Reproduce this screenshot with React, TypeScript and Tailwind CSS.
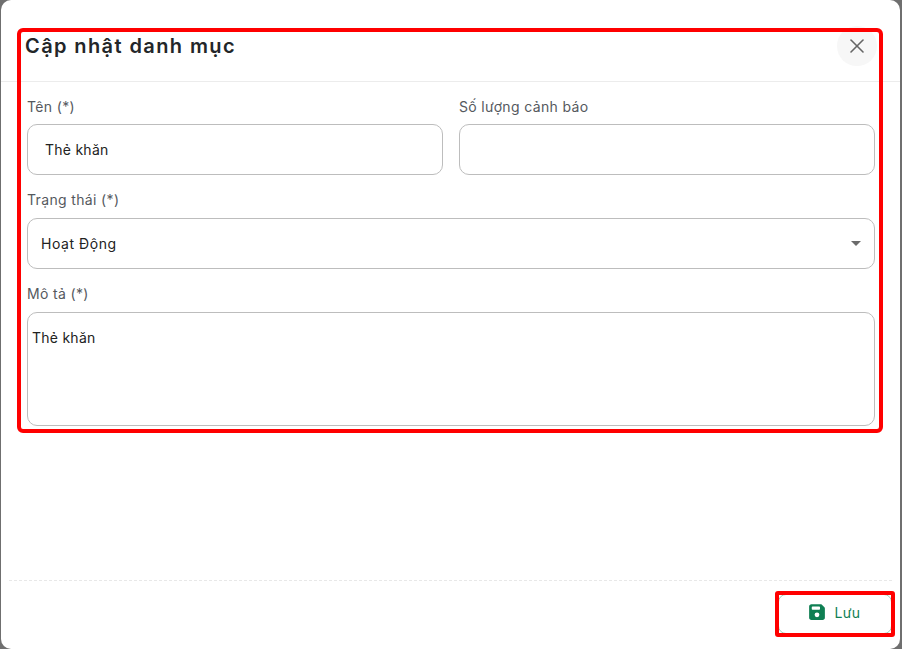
import React from 'react';
import { X } from 'lucide-react';

const labelClass = 'block text-[14px] leading-[18px] text-[#55595e] tracking-[0.35px]';
const boxClass = 'w-full rounded-[10px] border border-[#bdbdbd] bg-white text-[14px] tracking-[0.25px] text-[#222222] flex items-center';

const SaveIcon = () => (
  <svg width="18" height="18" viewBox="0 0 24 24" fill="#0f7f53" aria-hidden="true">
    <path d="M4.5 1.5h12.2c.6 0 1.1.2 1.5.6l3.7 3.7c.4.4.6.9.6 1.5v12.2c0 1.7-1.3 3-3 3h-15c-1.700 0-3-1.300-3-3v-15c0-1.700 1.300-3 3-3zM6 4.500c-.6 0-1 .4-1 1V8c0 .6.400 1 1 1h9c.6 0 1-.4 1-1V5.500c0-.6-.4-1-1-1H6zM12 19a3.200 3.200 0 1 0 0-6.400 3.200 3.200 0 0 0 0 6.400z" fillRule="evenodd" />
  </svg>
);

export default function App() {
  return (
    <div className="h-[649px] w-[902px] overflow-hidden bg-[#6f6f6f] font-['Inter',sans-serif]">
      <div className="relative ml-px flex h-full w-[899px] flex-col rounded-[10px] bg-white">
        {/* Header */}
        <div className="flex h-[82px] flex-none items-start justify-between border-b border-[#ececec] pl-6 pr-[23px]">
          <h2 className="mt-[34px] text-[20px] font-semibold leading-6 tracking-[1.4px] text-[#232629]">Cập nhật danh mục</h2>
          <button className="mt-[26px] flex h-10 w-10 items-center justify-center rounded-full bg-[#f7f7f7] text-[#666666]" aria-label="Đóng">
            <X size={24} strokeWidth={1.6} />
          </button>
        </div>

        {/* Form */}
        <div className="flex flex-none flex-col pl-[26px] pr-[25px] pt-4">
          <div className="grid grid-cols-2 gap-x-4">
            <div>
              <label className={labelClass}>Tên (*)</label>
              <div className={`${boxClass} mt-2 h-[51px] px-[17px]`}>Thẻ khăn</div>
            </div>
            <div>
              <label className={labelClass}>Số lượng cảnh báo</label>
              <div className={`${boxClass} mt-2 h-[51px]`} />
            </div>
          </div>
          <label className={`${labelClass} mt-4`}>Trạng thái (*)</label>
          <div className={`${boxClass} mt-[9px] h-[51px] justify-between pl-[13px] pr-[13px]`}>
            <span className="tracking-[0.55px]">Hoạt Động</span>
            <span className="h-0 w-0 border-x-[5px] border-t-[5px] border-x-transparent border-t-[#6b6b6b]" />
          </div>
          <label className={`${labelClass} mt-4`}>Mô tả (*)</label>
          <div className={`${boxClass} mt-[9px] h-[114px] items-start px-[4px] pt-[15px] leading-[20px]`}>Thẻ khăn</div>
        </div>

        {/* Footer */}
        <div className="mx-2 mt-auto flex h-[69px] flex-none items-start justify-end border-t border-dashed border-[#e8e8e8] pt-[9px]">
          <button className="-mr-[3px] flex h-[44px] w-[120px] -translate-x-px items-center justify-center gap-[9px] text-[14px] tracking-[0.3px] text-[#0f7f53]">
            <SaveIcon />
            <span>Lưu</span>
          </button>
        </div>

        {/* Annotation frames */}
        <div className="pointer-events-none absolute left-[777px] top-[594px] h-[40px] w-[114px] rounded-lg border border-[#9fd0ba]" />
        <div className="pointer-events-none absolute left-4 top-7 h-[405px] w-[866px] rounded-[6px] border-4 border-[#ff0000]" />
        <div className="pointer-events-none absolute left-[774px] top-[591px] h-[46px] w-[120px] rounded-[3px] border-4 border-[#ff0000]" />
      </div>
    </div>
  );
}
